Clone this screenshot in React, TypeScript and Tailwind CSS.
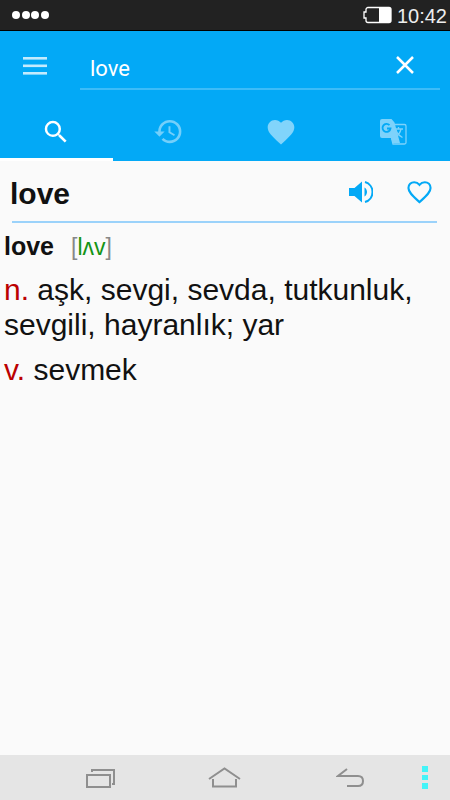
const font = "font-['Liberation_Sans',Arial,sans-serif]";

function Tab({ children, active }: { children: React.ReactNode; active?: boolean }) {
  return (
    <div className={`flex-1 h-full flex items-center justify-center pt-[15px] border-b-[3px] ${active ? "border-white" : "border-transparent"}`}>
      {children}
    </div>
  );
}

export default function App() {
  return (
    <div className={`w-[450px] h-[800px] flex flex-col overflow-hidden bg-[#fafafa] ${font}`}>
      {/* Status bar */}
      <div className="h-[31px] shrink-0 bg-[#222222] border-b border-black flex items-center pl-[12px] pr-[3px]">
        <div className="flex gap-[1.5px]">
          <span className="w-[8px] h-[8px] rounded-full bg-white" />
          <span className="w-[8px] h-[8px] rounded-full bg-white" />
          <span className="w-[8px] h-[8px] rounded-full bg-white" />
          <span className="w-[8px] h-[8px] rounded-full bg-white" />
        </div>
        <div className="ml-auto flex items-center gap-[5px]">
          <svg width="29" height="18" viewBox="0 0 29 18" fill="none">
            <path d="M5 1.500H26a2 2 0 0 1 2 2v11a2 2 0 0 1-2 2H5a2 2 0 0 1-2-2v-2.500H1V6h2V3.500a2 2 0 0 1 2-2z" stroke="#fff" strokeWidth="1.300" />
            <path d="M16 1.500H26a2 2 0 0 1 2 2v11a2 2 0 0 1-2 2H16z" fill="#fff" />
          </svg>
          <span className="text-[20px] leading-none text-[#eeeeee] mt-[2px]">10:42</span>
        </div>
      </div>

      {/* Header */}
      <div className="h-[130px] shrink-0 bg-[#03a9f6] flex flex-col">
        <div className="h-[59px] flex items-stretch shrink-0">
          <div className="w-[80px] flex items-start justify-center pt-[26px] pr-[10px]">
            <svg width="24" height="18" viewBox="0 0 24 18">
              <rect y="0" width="24" height="2.600" fill="#c4ebfd" />
              <rect y="7.500" width="24" height="2.600" fill="#c4ebfd" />
              <rect y="15" width="24" height="2.600" fill="#c4ebfd" />
            </svg>
          </div>
          <div className="w-[360px] border-b-2 border-[#3dbcf8] flex items-center justify-between pl-[10px] pr-[26px]">
            <span className="text-[22px] leading-none text-white mt-[19px] font-['Roboto',sans-serif]">love</span>
            <svg width="18" height="18" viewBox="0 0 18 18" className="mt-[11px]" fill="none" stroke="#fff" strokeWidth="2.500">
              <path d="M1 1L17 17M17 1L1 17" />
            </svg>
          </div>
        </div>
        <div className="flex-1 flex items-stretch w-[450px]">
          <Tab active>
            <svg width="30" height="30" viewBox="0 0 24 24" fill="#fff">
              <path d="M15.500 14h-.79l-.28-.27A6.471 6.471 0 0 0 16 9.500 6.500 6.500 0 1 0 9.500 16c1.610 0 3.090-.59 4.230-1.570l.27.28v.79l5 4.990L20.490 19l-4.990-5zm-6 0C7.010 14 5 11.990 5 9.500S7.010 5 9.500 5 14 7.010 14 9.500 11.990 14 9.500 14z" />
            </svg>
          </Tab>
          <Tab>
            <svg width="31" height="31" viewBox="0 0 24 24" fill="#74cffa">
              <path d="M13 3a9 9 0 0 0-9 9H1l3.890 3.890.07.14L9 12H6c0-3.870 3.130-7 7-7s7 3.130 7 7-3.130 7-7 7c-1.930 0-3.680-.79-4.940-2.060l-1.420 1.420A8.954 8.954 0 0 0 13 21a9 9 0 0 0 0-18zm-1 5v5l4.280 2.540.72-1.210-3.500-2.080V8H12z" />
            </svg>
          </Tab>
          <Tab>
            <svg width="32" height="32" viewBox="0 0 24 24" fill="#81d4fb">
              <path d="M12 21.350l-1.450-1.320C5.400 15.360 2 12.280 2 8.500 2 5.420 4.420 3 7.500 3c1.740 0 3.410.81 4.500 2.090C13.090 3.810 14.760 3 16.500 3 19.580 3 22 5.420 22 8.500c0 3.780-3.400 6.860-8.550 11.540L12 21.350z" />
            </svg>
          </Tab>
          <Tab>
            <svg width="27" height="27" viewBox="0 0 27 27" fill="none">
              <path d="M2 1h9.500l3 3.500L20 25h-7L11 20H2a2 2 0 0 1-2-2V3a2 2 0 0 1 2-2z" fill="#7dd2fb" />
              <path d="M9.500 7.200a4 4 0 1 0 1 3.300H7" stroke="#03a9f6" strokeWidth="1.800" />
              <path d="M11 6.500h13.500a1.500 1.500 0 0 1 1.500 1.500v16.500a1.500 1.500 0 0 1-1.500 1.500H13l-1.500-6" stroke="#7dd2fb" strokeWidth="1.300" />
              <path d="M14 11h9M18.500 9v2M21 11c-.8 4-3.500 7-6.500 8.500M16 12c.8 3 3 5.500 6.500 7.500" stroke="#7dd2fb" strokeWidth="1.300" />
            </svg>
          </Tab>
        </div>
      </div>

      {/* Content */}
      <div className="flex-1 flex flex-col bg-[#fafafa]">
        <div className="h-[62px] ml-[12px] mr-[13px] shrink-0 border-b-2 border-[#9bd2fa] flex items-center">
          <span className="-ml-[2px] text-[30px] leading-none font-bold text-[#111111] mt-[6px]">love</span>
          <div className="ml-auto flex items-center gap-[34px] pr-[5px] mt-[1px]">
            <svg width="24" height="24" viewBox="0 0 24 24" fill="#03a9f6">
              <path d="M0 8h5.500L13 1.500v21L5.500 16H0z" />
              <path d="M15.500 7.500c1.600 1 2.500 2.700 2.500 4.500s-.9 3.500-2.500 4.500z" />
              <path d="M16 2c4.500 1.300 7.500 5.300 7.500 10s-3 8.700-7.500 10" fill="none" stroke="#03a9f6" strokeWidth="2" />
            </svg>
            <svg width="25" height="24" viewBox="0 0 26 24" fill="none" stroke="#03a9f6" strokeWidth="2.200">
              <path d="M13 22.500l-1.700-1.500C5.300 15.500 1.500 12 1.500 7.800 1.500 4.400 4.100 1.800 7.500 1.800c1.900 0 4 .9 5.500 2.800 1.500-1.900 3.600-2.800 5.500-2.800 3.400 0 6 2.600 6 6 0 4.200-3.800 7.700-9.800 13.200z" />
            </svg>
          </div>
        </div>
        <div className="pl-[4px] pr-[20px] text-black">
          <div className="flex items-baseline mt-[8px] leading-[30px]">
            <span className="text-[25px] font-bold text-[#111111]">love</span>
            <span className="text-[23px] ml-[17px] text-[#888888]">[<span className="text-[#149414]">lʌv</span>]</span>
          </div>
          <p className="text-[30px] leading-[35px] mt-[10px] text-[#111111]">
            <span className="text-[#bb0000]">n.</span> aşk, sevgi, sevda, tutkunluk, sevgili, hayranlık; yar
          </p>
          <p className="text-[30px] leading-[35px] mt-[10px] text-[#111111]">
            <span className="text-[#bb0000]">v.</span> sevmek
          </p>
        </div>
      </div>

      {/* Nav bar */}
      <div className="h-[45px] shrink-0 bg-[#e5e5e5] flex items-center">
        <div className="w-[450px] flex items-center pl-[86px]">
          <svg width="29" height="20" viewBox="0 0 29 20" fill="none" stroke="#8f8f8f" strokeWidth="2">
            <rect x="1" y="7" width="23" height="12" />
            <path d="M6 4V2h22v14h-2" />
          </svg>
          <svg width="34" height="21" viewBox="0 0 34 21" className="ml-[93px]" fill="none" stroke="#8f8f8f" strokeWidth="2">
            <path d="M1 12L16.500 1.500 32 12M5 12v7.500h23V12" />
          </svg>
          <svg width="29" height="20" viewBox="0 0 29 20" className="ml-[94px]" fill="none" stroke="#8f8f8f" strokeWidth="2">
            <path d="M11 1L2 8h20c3 0 5 2 5 5s-2 5-5 5H11" />
          </svg>
          <div className="ml-[57px] flex flex-col gap-[3px]">
            <span className="w-[6px] h-[5.500px] bg-[#44f4f8]" />
            <span className="w-[6px] h-[5.500px] bg-[#44f4f8]" />
            <span className="w-[6px] h-[5.500px] bg-[#44f4f8]" />
          </div>
        </div>
      </div>
    </div>
  );
}
